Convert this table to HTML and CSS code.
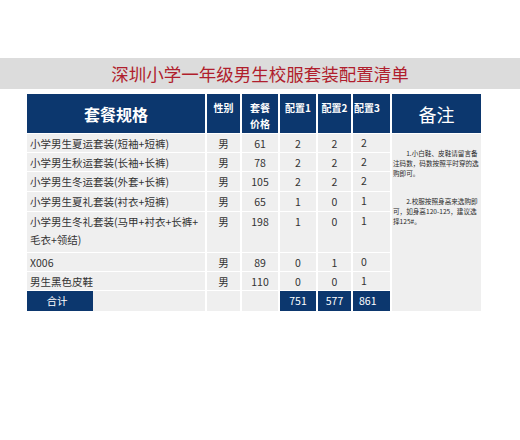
FILE: index.html
```html
<!DOCTYPE html>
<html lang="zh-CN">
<head>
<meta charset="utf-8">
<title>深圳小学一年级男生校服套装配置清单</title>
<link rel="stylesheet" href="styles.css">
</head>
<body>
<div class="band"><h1 class="title">深圳小学一年级男生校服套装配置清单</h1></div>
<div class="grid">
  <div class="hd hd-big">套餐规格</div>
  <div class="hd hd-small">性别</div>
  <div class="hd hd-small hd-two">套餐<br>价格</div>
  <div class="hd hd-small">配置1</div>
  <div class="hd hd-small">配置2</div>
  <div class="hd hd-small hd-left">配置3</div>
  <div class="hd hd-note">备注</div>

  <div class="notes">
    <p>1.小白鞋、皮鞋请留言备注码数，码数按照平时穿的选购即可。</p>
    <p>2.校服按照身高来选购即可，如身高120-125，建议选择125#。</p>
  </div>

  <div class="c name">小学男生夏运套装(短袖+短裤)</div><div class="c mid">男</div><div class="c mid">61</div><div class="c mid">2</div><div class="c mid">2</div><div class="c c3">2</div>
  <div class="c name">小学男生秋运套装(长袖+长裤)</div><div class="c mid">男</div><div class="c mid">78</div><div class="c mid">2</div><div class="c mid">2</div><div class="c c3">2</div>
  <div class="c name">小学男生冬运套装(外套+长裤)</div><div class="c mid">男</div><div class="c mid">105</div><div class="c mid">2</div><div class="c mid">2</div><div class="c c3">2</div>
  <div class="c name">小学男生夏礼套装(衬衣+短裤)</div><div class="c mid">男</div><div class="c mid">65</div><div class="c mid">1</div><div class="c mid">0</div><div class="c c3">1</div>
  <div class="c name">小学男生冬礼套装(马甲+衬衣+长裤+<wbr>毛衣+领结)</div><div class="c mid">男</div><div class="c mid">198</div><div class="c mid">1</div><div class="c mid">0</div><div class="c c3">1</div>
  <div class="c name">X006</div><div class="c mid">男</div><div class="c mid">89</div><div class="c mid">0</div><div class="c mid">1</div><div class="c c3">0</div>
  <div class="c name">男生黑色皮鞋</div><div class="c mid">男</div><div class="c mid">110</div><div class="c mid">0</div><div class="c mid">0</div><div class="c c3">1</div>

  <div class="total-first"><span class="total-label">合计</span><span class="total-rest"></span></div>
  <div class="c"></div><div class="c"></div>
  <div class="tot mid">751</div><div class="tot mid">577</div><div class="tot tot3">861</div>
</div>
</body>
</html>
```
FILE: styles.css
```css
* { box-sizing: border-box; }
html, body { margin: 0; padding: 0; background: #ffffff; }
body {
  width: 520px;
  height: 440px;
  font-family: "Noto Sans CJK SC", "Noto Sans", sans-serif;
  color: #333333;
  padding-top: 58px;
}
.band {
  height: 31px;
  background: #dcdcdc;
  display: flex;
  align-items: center;
  justify-content: center;
}
.title {
  margin: 0;
  font-size: 17.5px;
  font-weight: normal;
  color: #b01e2d;
  line-height: 1;
  letter-spacing: 0;
}
.grid {
  margin: 5px 0 0 27px;
  display: grid;
  grid-template-columns: 178px 33px 36px 36px 33px 37px 89px;
  grid-template-rows: 39px 18px 18px 19px 19px 40px 18px 18px 20px;
  column-gap: 2px;
  row-gap: 1px;
  width: 454px;
}
.hd {
  background: #0c376e;
  color: #ffffff;
  display: flex;
  justify-content: center;
}
.hd-big {
  align-items: center;
  font-size: 16px;
  font-weight: bold;
}
.hd-small {
  font-size: 10px;
  font-weight: bold;
  line-height: 16px;
  padding-top: 6px;
  text-align: center;
}
.hd-left { justify-content: flex-start; padding-left: 1px; }
.hd-note {
  align-items: center;
  font-size: 18px;
  font-weight: normal;
}
.notes {
  grid-column: 7;
  grid-row: 2 / 10;
  background: #efefef;
  padding: 14px 1px 0 1px;
  font-size: 6.6px;
  line-height: 10px;
  color: #2a2a2a;
}
.notes p {
  margin: 0 0 18px 0;
  text-indent: 2em;
}
.c {
  background: #efefef;
  font-size: 10.5px;
  line-height: 18px;
  padding-top: 1px;
}
.name { padding-left: 3px; padding-right: 0; }
.mid { text-align: center; }
.c3 { padding-left: 8px; padding-top: 0; }
.total-first {
  display: flex;
}
.total-label {
  width: 66px;
  background: #0c376e;
  color: #ffffff;
  font-size: 10.5px;
  line-height: 20px;
  text-align: center;
  padding-right: 6px;
}
.total-rest {
  flex: 1;
  background: #efefef;
}
.tot {
  background: #0c376e;
  color: #ffffff;
  font-size: 10.5px;
  line-height: 20px;
}
.tot3 { padding-left: 6px; }
```
